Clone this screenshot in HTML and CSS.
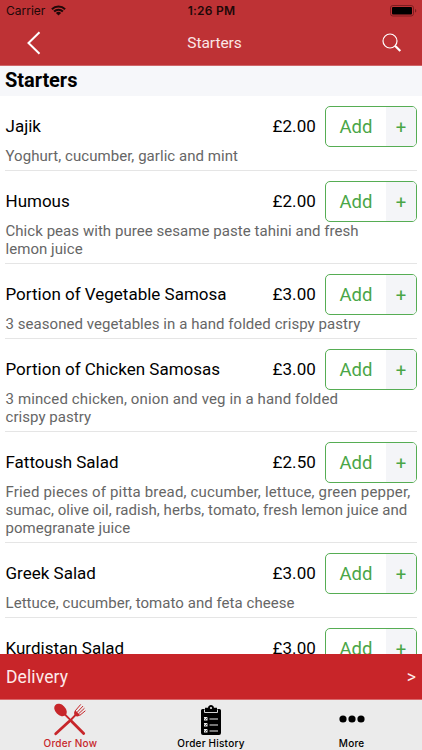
FILE: index.html
```html
<!DOCTYPE html>
<html lang="en">
<head>
<meta charset="utf-8">
<title>Starters</title>
<link rel="stylesheet" href="styles.css">
</head>
<body>
<div class="app">
  <header class="header">
    <div class="status">
      <div class="carrier"><span>Carrier</span>
        <svg width="15" height="11" viewBox="0 0 15 11" fill="none" stroke="#200808"><path d="M.9 4.2a9.4 9.4 0 0 1 13.2 0M3.1 6.5a6.2 6.2 0 0 1 8.8 0" stroke-width="2"/><path d="M7.5 10.6 4.9 8a3.7 3.7 0 0 1 5.2 0z" fill="#200808" stroke="none"/></svg>
      </div>
      <span class="time">1:26 PM</span>
      <svg class="battery" width="27" height="12" viewBox="0 0 27 12"><rect x=".5" y=".5" width="23" height="10.5" rx="2.4" fill="none" stroke="#7c1d20"/><rect x="2" y="2" width="20" height="7.5" rx="1" fill="#000"/><path d="M25 4c1.7.3 1.7 3.3 0 3.6z" fill="#7c1d20"/></svg>
    </div>
    <div class="nav">
      <svg class="back" width="14" height="24" viewBox="0 0 14 24" fill="none" stroke="#fff" stroke-width="2"><path d="M12.500 1.200 1.500 12l11 10.800"/></svg>
      <span class="title">Starters</span>
      <svg class="search" width="20" height="20" viewBox="0 0 20 20" fill="none" stroke="#fff"><circle cx="8" cy="8" r="7" stroke-width="1.200"/><path d="m13 12.800 5.300 5.200" stroke-width="2.200"/></svg>
    </div>
  </header>
  <h1 class="section"><span>Starters</span></h1>
  <main class="list">
    <article class="item"><div class="row"><h2>Jajik</h2><span class="price">£2.00</span><button class="add"><span>Add</span><b>+</b></button></div><p>Yoghurt, cucumber, garlic and mint</p></article>
    <article class="item"><div class="row"><h2>Humous</h2><span class="price">£2.00</span><button class="add"><span>Add</span><b>+</b></button></div><p>Chick peas with puree sesame paste tahini and fresh<br>lemon juice</p></article>
    <article class="item"><div class="row"><h2>Portion of Vegetable Samosa</h2><span class="price">£3.00</span><button class="add"><span>Add</span><b>+</b></button></div><p>3 seasoned vegetables in a hand folded crispy pastry</p></article>
    <article class="item"><div class="row"><h2>Portion of Chicken Samosas</h2><span class="price">£3.00</span><button class="add"><span>Add</span><b>+</b></button></div><p><span class="loose">3 minced chicken, onion and veg in a hand folded</span><br>crispy pastry</p></article>
    <article class="item"><div class="row"><h2>Fattoush Salad</h2><span class="price">£2.50</span><button class="add"><span>Add</span><b>+</b></button></div><p><span class="looser">Fried pieces of pitta bread, cucumber, lettuce, green pepper,</span><br>sumac, olive oil, radish, herbs, tomato, fresh lemon juice and<br>pomegranate juice</p></article>
    <article class="item"><div class="row"><h2>Greek Salad</h2><span class="price">£3.00</span><button class="add"><span>Add</span><b>+</b></button></div><p>Lettuce, cucumber, tomato and feta cheese</p></article>
    <article class="item"><div class="row"><h2>Kurdistan Salad</h2><span class="price">£3.00</span><button class="add"><span>Add</span><b>+</b></button></div></article>
  </main>
  <div class="delivery"><span>Delivery</span><span class="arrow">&gt;</span></div>
  <nav class="tabs">
    <div class="tab active">
      <svg width="34" height="33" viewBox="0 0 34 33"><ellipse cx="7.500" cy="7" rx="5.100" ry="7.200" transform="rotate(-45 7.500 7)" fill="#c7262a"/><g fill="none" stroke="#c7262a" stroke-linecap="round"><path d="m10 9.500 8 8.200" stroke-width="1.800"/><path d="m18 17.700 12.700 12.800" stroke-width="2.800"/><path d="m24 10.500-7.800 8" stroke-width="1.800"/><path d="M16 18.500 2.700 30.700" stroke-width="2.800"/><path d="m22.500 7.500 5-5.800M24.600 8.800l5.200-5.500M26 10.400l5.200-4.900M27.100 12.100l5-4.100" stroke-width="1"/></g><path d="m22.200 7.200 5.100 5.100c-1.900 1.600-4 1.300-5.200.2-1.200-1.200-1.500-3.500.1-5.300z" fill="#c7262a"/></svg>
      <span>Order Now</span>
    </div>
    <div class="tab">
      <svg width="22" height="31" viewBox="0 0 22 31"><path d="M2.500 4H5V2.800h3C8.500-.8 13.500-.8 14 2.800h3V4h2.500Q21 4 21 5.500V28Q21 30 19 30H3Q1 30 1 28V5.500Q1 4 2.500 4z"/><circle cx="11" cy="3" r="1.100" fill="#ebebeb"/><path d="M4.500 4.500v3h13v-3" fill="none" stroke="#ebebeb" stroke-width=".9"/><g fill="#ebebeb"><path d="M4 12h3.500v3.500H4zM4 18h3.500v3.500H4zM4 24h3.500v3.500H4z"/><path d="M9.500 13.400H18v1H9.500zM9.500 19.400H18v1H9.500zM9.500 25.400H18v1H9.500z"/></g><path d="m4.500 13.500 1 1 2-2M4.500 19.500l1 1 2-2M4.500 25.500l1 1 2-2" fill="none" stroke="#000" stroke-width=".6"/></svg>
      <span>Order History</span>
    </div>
    <div class="tab more">
      <svg width="26" height="8" viewBox="0 0 26 8"><circle cx="4" cy="4" r="3.600"/><circle cx="13" cy="4" r="3.600"/><circle cx="22" cy="4" r="3.600"/></svg>
      <span>More</span>
    </div>
  </nav>
</div>
</body>
</html>
```
FILE: styles.css
```css
* { box-sizing: border-box; }
body { margin: 0; background: #fff; font-family: Roboto, sans-serif; }
.app { width: 422px; height: 750px; overflow: hidden; display: flex; flex-direction: column; }
.header { height: 66px; flex: none; background: #be3235; border-bottom: 1px solid #cf6669; }
.status { height: 22px; display: grid; grid-template-columns: 1fr auto 1fr; align-items: center; padding: 0 5px 1px 6px; font-family: Inter, sans-serif; font-size: 12px; color: #200808; }
.carrier { display: flex; align-items: center; gap: 6px; }
.time { font-weight: 600; letter-spacing: .25px; }
.battery { justify-self: end; }
.nav { height: 42px; display: grid; grid-template-columns: 1fr auto 1fr; align-items: center; padding: 0 20px 0 27px; }
.title { color: #fbe6e6; font-size: 15.5px; letter-spacing: -.05px; }
.search { justify-self: end; }
.section { flex: none; height: 30px; margin: 0; padding-left: 5px; background: #f6f7fa; font-size: 20px; line-height: 28px; font-weight: 700; letter-spacing: -.05px; }
.list { flex: 1; min-height: 0; overflow: hidden; padding: 0 5px; }
.item { padding: 10px 0 5px; border-bottom: 1px solid #e5e5e5; }
.row { height: 41px; display: flex; align-items: center; }
h2 { flex: 1; margin: 0; padding: 0 0 2px .5px; font-size: 17px; line-height: 20px; font-weight: 400; letter-spacing: 0; }
.price { font-size: 17px; line-height: 20px; padding-bottom: 2px; margin-right: 9px; letter-spacing: .1px; }
.add { width: 92px; height: 41px; padding: 0; display: flex; border: 1px solid #56ad54; border-radius: 5px; background: #fff; overflow: hidden; color: #4aa647; font-family: inherit; font-size: 18.5px; line-height: 40px; }
.add span { width: 60px; text-align: center; }
.add b { flex: 1; background: #f4f5f8; font-weight: 400; line-height: 42px; }
p { margin: 0; padding-left: .5px; font-size: 15px; line-height: 18px; color: #666; white-space: nowrap; letter-spacing: .05px; }
.loose { letter-spacing: .12px; }
.looser { letter-spacing: .17px; }
.delivery { flex: none; height: 45px; display: flex; align-items: center; justify-content: space-between; padding: 0 6px; background: #c82529; color: #fdeaea; font-size: 17.5px; letter-spacing: .1px; }
.tabs { flex: none; height: 51px; display: grid; grid-template-columns: 1fr 1fr 1fr; background: #ebebeb; border-top: 1px solid #d9696c; font-family: Inter, sans-serif; font-size: 10px; font-weight: 500; letter-spacing: .22px; }
.tab { display: flex; flex-direction: column; align-items: center; justify-content: flex-end; padding-bottom: 1px; }
.tab svg { margin-bottom: 1px; }
.tab.more svg { margin-bottom: 14px; }
.active { color: #c7262a; }
```
